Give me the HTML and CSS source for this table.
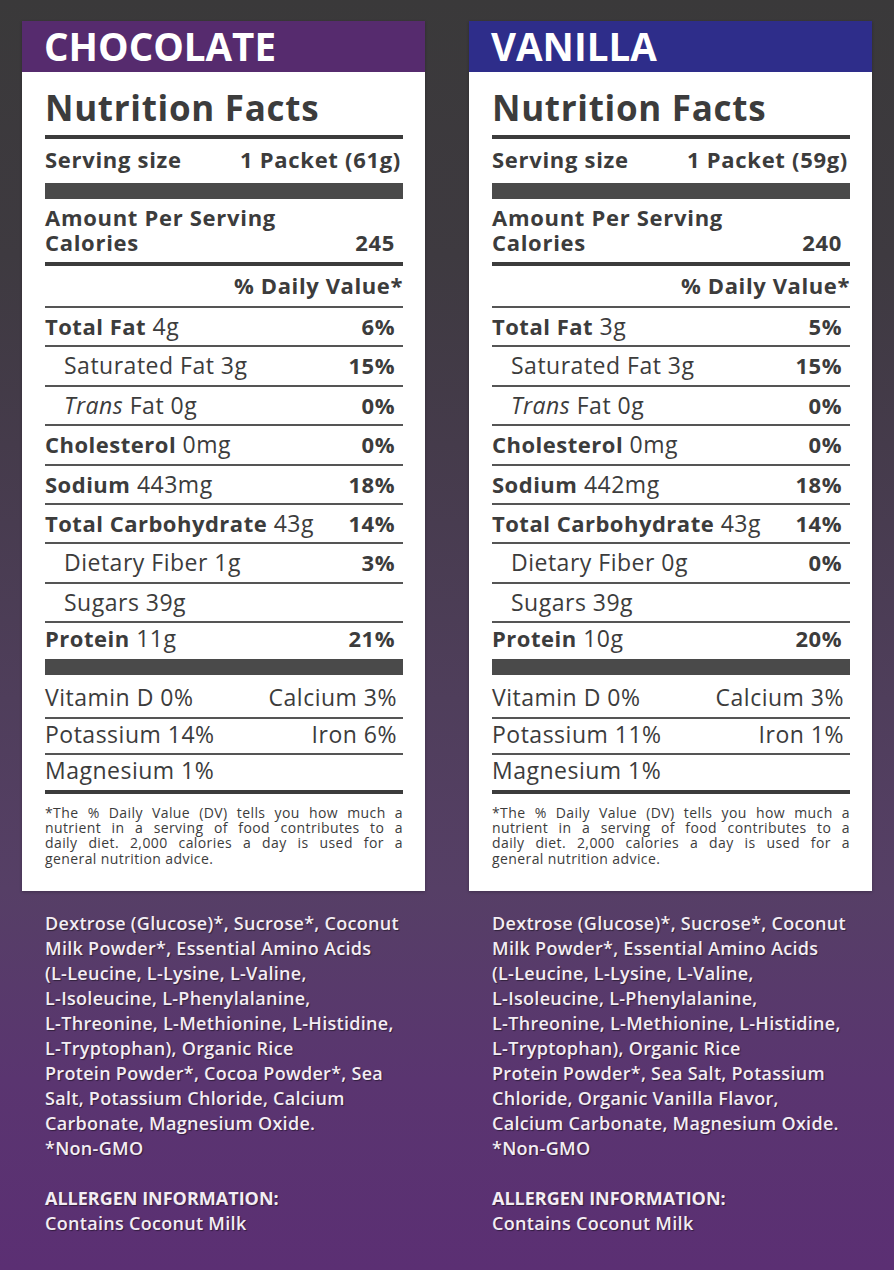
FILE: index.html
```html
<!DOCTYPE html>
<html lang="en">
<head>
<meta charset="utf-8">
<title>Nutrition Facts</title>
<link rel="stylesheet" href="styles.css">
</head>
<body>
<main class="page">
  <section class="col">
    <div class="card">
      <div class="flavor flavor-choc">CHOCOLATE</div>
      <div class="facts">
        <h1 class="title">Nutrition Facts</h1>
        <div class="serving"><span>Serving size</span><span class="serving-val">1 Packet (61g)</span></div>
        <div class="bar"></div>
        <div class="amount">Amount Per Serving</div>
        <div class="cal"><span>Calories</span><span class="cal-val">245</span></div>
        <div class="dv">% Daily Value*</div>
        <div class="row"><span><b>Total Fat</b> 4g</span><b class="pct">6%</b></div>
        <div class="row sub"><span>Saturated Fat 3g</span><b class="pct">15%</b></div>
        <div class="row sub"><span><i>Trans</i> Fat 0g</span><b class="pct">0%</b></div>
        <div class="row"><span><b>Cholesterol</b> 0mg</span><b class="pct">0%</b></div>
        <div class="row"><span><b>Sodium</b> 443mg</span><b class="pct">18%</b></div>
        <div class="row"><span><b>Total Carbohydrate</b> 43g</span><b class="pct">14%</b></div>
        <div class="row sub"><span>Dietary Fiber 1g</span><b class="pct">3%</b></div>
        <div class="row sub"><span>Sugars 39g</span></div>
        <div class="row last"><span><b>Protein</b> 11g</span><b class="pct">21%</b></div>
        <div class="bar"></div>
        <div class="vit first"><span>Vitamin D 0%</span><span>Calcium 3%</span></div>
        <div class="vit"><span>Potassium 14%</span><span>Iron 6%</span></div>
        <div class="vit end"><span>Magnesium 1%</span></div>
        <p class="foot">
          <span class="jl">*The % Daily Value (DV) tells you how much a</span>
          <span class="jl">nutrient in a serving of food contributes to a</span>
          <span class="jl">daily diet. 2,000 calories a day is used for a</span>
          <span class="ll">general nutrition advice.</span>
        </p>
      </div>
    </div>
    <div class="ingredients">
      <p class="ing">Dextrose (Glucose)*, Sucrose*, Coconut<br>Milk Powder*, Essential Amino Acids<br>(L-Leucine, L-Lysine, L-Valine,<br>L-Isoleucine, L-Phenylalanine,<br>L-Threonine, L-Methionine, L-Histidine,<br>L-Tryptophan), Organic Rice<br>Protein Powder*, Cocoa Powder*, Sea<br>Salt, Potassium Chloride, Calcium<br>Carbonate, Magnesium Oxide.<br>*Non-GMO</p>
      <p class="allergen"><span class="allergen-h">ALLERGEN INFORMATION:</span><br>Contains Coconut Milk</p>
    </div>
  </section>

  <section class="col">
    <div class="card">
      <div class="flavor flavor-van">VANILLA</div>
      <div class="facts">
        <h1 class="title">Nutrition Facts</h1>
        <div class="serving"><span>Serving size</span><span class="serving-val">1 Packet (59g)</span></div>
        <div class="bar"></div>
        <div class="amount">Amount Per Serving</div>
        <div class="cal"><span>Calories</span><span class="cal-val">240</span></div>
        <div class="dv">% Daily Value*</div>
        <div class="row"><span><b>Total Fat</b> 3g</span><b class="pct">5%</b></div>
        <div class="row sub"><span>Saturated Fat 3g</span><b class="pct">15%</b></div>
        <div class="row sub"><span><i>Trans</i> Fat 0g</span><b class="pct">0%</b></div>
        <div class="row"><span><b>Cholesterol</b> 0mg</span><b class="pct">0%</b></div>
        <div class="row"><span><b>Sodium</b> 442mg</span><b class="pct">18%</b></div>
        <div class="row"><span><b>Total Carbohydrate</b> 43g</span><b class="pct">14%</b></div>
        <div class="row sub"><span>Dietary Fiber 0g</span><b class="pct">0%</b></div>
        <div class="row sub"><span>Sugars 39g</span></div>
        <div class="row last"><span><b>Protein</b> 10g</span><b class="pct">20%</b></div>
        <div class="bar"></div>
        <div class="vit first"><span>Vitamin D 0%</span><span>Calcium 3%</span></div>
        <div class="vit"><span>Potassium 11%</span><span>Iron 1%</span></div>
        <div class="vit end"><span>Magnesium 1%</span></div>
        <p class="foot">
          <span class="jl">*The % Daily Value (DV) tells you how much a</span>
          <span class="jl">nutrient in a serving of food contributes to a</span>
          <span class="jl">daily diet. 2,000 calories a day is used for a</span>
          <span class="ll">general nutrition advice.</span>
        </p>
      </div>
    </div>
    <div class="ingredients">
      <p class="ing">Dextrose (Glucose)*, Sucrose*, Coconut<br>Milk Powder*, Essential Amino Acids<br>(L-Leucine, L-Lysine, L-Valine,<br>L-Isoleucine, L-Phenylalanine,<br>L-Threonine, L-Methionine, L-Histidine,<br>L-Tryptophan), Organic Rice<br>Protein Powder*, Sea Salt, Potassium<br>Chloride, Organic Vanilla Flavor,<br>Calcium Carbonate, Magnesium Oxide.<br>*Non-GMO</p>
      <p class="allergen"><span class="allergen-h">ALLERGEN INFORMATION:</span><br>Contains Coconut Milk</p>
    </div>
  </section>
</main>
</body>
</html>
```

FILE: styles.css
```css
* { box-sizing: border-box; }

html, body {
  margin: 0;
  padding: 0;
}

body {
  width: 894px;
  min-height: 1270px;
  font-family: "Open Sans", "Liberation Sans", sans-serif;
  background: linear-gradient(to bottom, #3a393a 0%, #3e3a40 20%, #453b4b 35%, #4f3e5b 55%, #563f66 70%, #5a3570 85%, #5b2f73 100%);
  color: #3c3c3c;
}

.page {
  display: grid;
  grid-template-columns: 403px 403px;
  column-gap: 44px;
  padding: 21px 22px 0 22px;
  min-height: 1270px;
}

.card {
  background: #ffffff;
  box-shadow: 0 1px 3px rgba(0, 0, 0, 0.25);
}

.flavor {
  height: 51px;
  line-height: 51px;
  padding-left: 22px;
  font-size: 38.5px;
  font-weight: 700;
  color: #ffffff;
}
.flavor-choc { background: #562b6e; }
.flavor-van { background: #2e2d8a; }

.facts {
  padding: 16px 22px 25px 23px;
}

.title {
  margin: 0;
  font-size: 35px;
  line-height: 40px;
  font-weight: 700;
  letter-spacing: 0.7px;
  color: #3c3c3c;
  padding-bottom: 7px;
  border-bottom: 4px solid #3c3c3c;
}

.serving {
  display: flex;
  justify-content: space-between;
  font-size: 22px;
  font-weight: 700;
  letter-spacing: 0.7px;
  line-height: 28px;
  margin-top: 6px;
  padding-right: 2px;
}

.bar {
  height: 16px;
  background: #4a4a4a;
}
.serving + .bar { margin-top: 10px; }

.amount {
  font-size: 22px;
  font-weight: 700;
  letter-spacing: 0.7px;
  line-height: 25px;
  margin-top: 6px;
}

.cal {
  display: flex;
  justify-content: space-between;
  font-size: 22px;
  font-weight: 700;
  letter-spacing: 0.7px;
  line-height: 25px;
  padding-right: 8px;
  padding-bottom: 7px;
  border-bottom: 4px solid #3c3c3c;
}

.dv {
  text-align: right;
  font-size: 22px;
  font-weight: 700;
  letter-spacing: 0.6px;
  line-height: 28px;
  padding-top: 5px;
  padding-bottom: 7px;
  border-bottom: 2px solid #555555;
}

.row {
  display: flex;
  justify-content: space-between;
  align-items: baseline;
  font-size: 23px;
  font-weight: 400;
  letter-spacing: 0.5px;
  line-height: 37.4px;
  height: 39.4px;
  padding-right: 8px;
  border-bottom: 2px solid #555555;
}
.row b {
  font-size: 22px;
  font-weight: 700;
  letter-spacing: 0.5px;
}
.row.sub { padding-left: 19px; }
.row.last {
  border-bottom: none;
  height: 36px;
  line-height: 30px;
}

.vit {
  display: flex;
  justify-content: space-between;
  font-size: 23px;
  font-weight: 400;
  letter-spacing: 0.5px;
  line-height: 31.6px;
  padding-bottom: 3px;
  padding-right: 6px;
  border-bottom: 2px solid #555555;
}
.vit.first { padding-top: 7px; }
.vit.end { border-bottom: 4px solid #3c3c3c; }

.foot {
  margin: 11px 0 0 0;
  font-size: 14px;
  letter-spacing: 0.4px;
  line-height: 15.2px;
  color: #3c3c3c;
}
.jl {
  display: block;
  text-align: justify;
  text-align-last: justify;
}
.ll { display: block; }

.ingredients {
  padding: 20px 0 0 23px;
  color: #f3edf4;
  font-size: 18px;
  font-weight: 600;
  letter-spacing: 0.3px;
  line-height: 25px;
  text-shadow: 1px 1px 1px rgba(0, 0, 0, 0.45);
}
.ing { margin: 0; }
.allergen { margin: 25px 0 0 0; }
.allergen-h {
  font-weight: 700;
  letter-spacing: 0;
}
```
